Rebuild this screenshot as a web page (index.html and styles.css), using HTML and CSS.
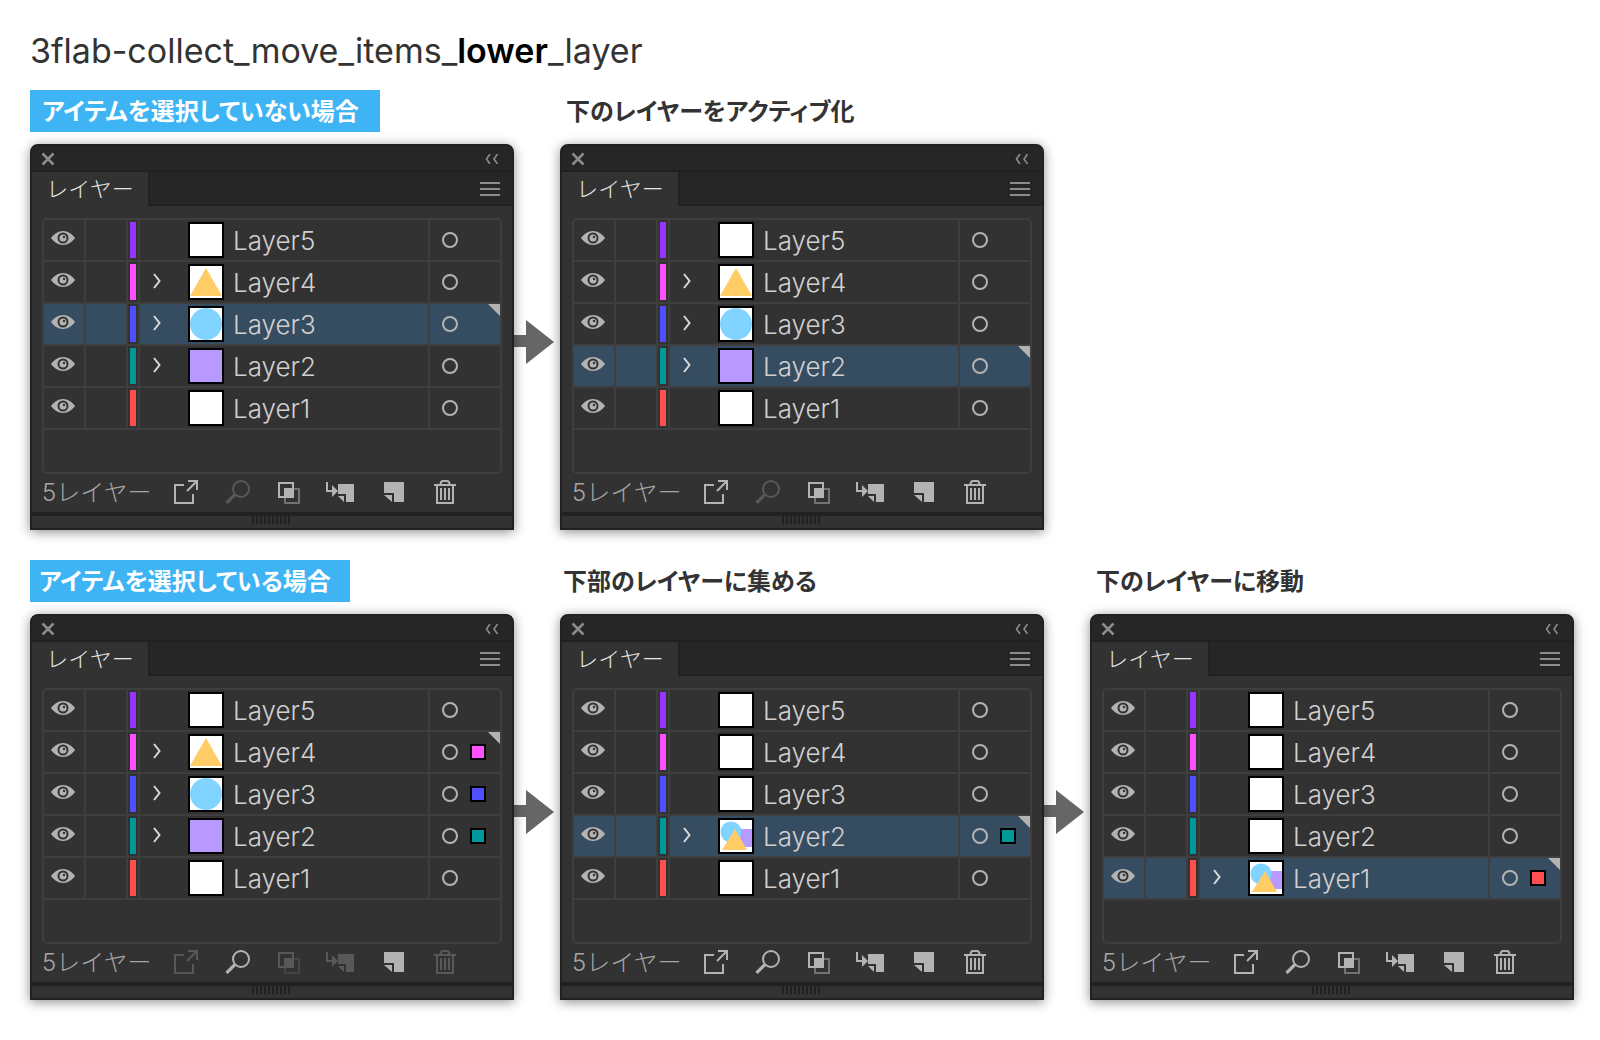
FILE: index.html
```html
<!DOCTYPE html>
<html lang="ja">
	<head>
		<meta charset="utf-8">
		<title>3flab-collect_move_items_lower_layer</title>
		<link rel="stylesheet" href="styles.css">
	</head>
	<body>
		<svg class="defs">
			<symbol id="close" viewBox="0 0 14 14"><path d="M1.500 1.500l11 11M12.500 1.500l-11 11" fill="none" stroke="currentColor" stroke-width="2.500"/></symbol>
			<symbol id="fold" viewBox="0 0 14 10"><path d="M5 0L1.500 5L5 10M12.500 0L9 5l3.500 5" fill="none" stroke="currentColor" stroke-width="1.600"/></symbol>
			<symbol id="menu" viewBox="0 0 20 14"><path d="M0 1h20M0 7h20M0 13h20" stroke="currentColor" stroke-width="2"/></symbol>
			<symbol id="eye" viewBox="0 0 24 14">
				<path d="M0 7C3 3 7 0 12 0s9 3 12 7c-3 4-7 7-12 7S3 11 0 7z" fill="currentColor"/>
				<circle cx="12" cy="7" r="4.500" fill="none" stroke="#323232" stroke-width="2"/>
				<circle cx="13" cy="6" r="1.200" fill="#323232"/>
			</symbol>
			<symbol id="arrow" viewBox="0 0 8 16"><path d="M1 1l5.500 7L1 15" fill="none" stroke="currentColor" stroke-width="2"/></symbol>
			<symbol id="export" viewBox="0 0 32 24"><path d="M14 5H5v18h18v-9M17 11L27 1M18 1h9v9" fill="none" stroke="currentColor" stroke-width="2"/></symbol>
			<symbol id="search" viewBox="0 0 32 24">
				<circle cx="19" cy="9" r="8" fill="none" stroke="currentColor" stroke-width="2"/>
				<path d="M13 14.500L4.500 23" stroke="currentColor" stroke-width="3.200"/>
			</symbol>
			<symbol id="mask" viewBox="0 0 32 24">
				<path d="M11 9h14v14H11z" fill="none" stroke="currentColor" stroke-width="2" opacity=".5"/>
				<path d="M5 3h14v14H5z" fill="none" stroke="currentColor" stroke-width="2"/>
				<path d="M10 8h10v10H10z" fill="currentColor"/>
			</symbol>
			<symbol id="sub" viewBox="0 0 32 24">
				<path d="M1 2v9h6" fill="none" stroke="currentColor" stroke-width="2"/>
				<path d="M6 5l6 6-6 6zM12 4h16v18h-8v-8h-8zM12 16h6v6z" fill="currentColor"/>
			</symbol>
			<symbol id="new" viewBox="0 0 32 24"><path d="M6 2h20v20H16v-9H6zM6 15h8v7z" fill="currentColor"/></symbol>
			<symbol id="trash" viewBox="0 0 32 24">
				<path d="M4 5h22M10.500 4.500C10.500 2 12 1 13 1h4c1 0 2.500 1 2.500 3.500M7 5v18h16V5M11 8v12M15 8v12M19 8v12" fill="none" stroke="currentColor" stroke-width="2"/>
			</symbol>
			<symbol id="triangle" viewBox="0 0 32 32"><path d="M16 2l16 28H0z" fill="#ffcc66"/></symbol>
			<symbol id="circle" viewBox="0 0 32 32"><circle cx="16" cy="16" r="16" fill="#80d4ff"/></symbol>
			<symbol id="square" viewBox="0 0 32 32"><path d="M0 0h32v32H0z" fill="#b899ff"/></symbol>
			<symbol id="mix" viewBox="0 0 32 32">
				<path d="M18 9h14v18H18z" fill="#b899ff"/>
				<circle cx="11" cy="12" r="10.500" fill="#80d4ff"/>
				<path d="M15 9l12 21H2z" fill="#ffcc66"/>
			</symbol>
		</svg>

		<h1>3flab-collect_move_items_<b>lower</b>_layer</h1>

		<section class="case">
			<h2 class="tag">アイテムを選択していない場合</h2>
			<h2 class="second">下のレイヤーをアクティブ化</h2>
			<div class="panel" data-thumbs=",triangle,circle,square," data-active="3" data-current="3" data-off="search"></div>
			<svg class="next" viewBox="0 0 46 44"><path d="M0 15h12V0l28 22-28 22V27H0z"/></svg>
			<div class="panel" data-thumbs=",triangle,circle,square," data-active="2" data-current="2" data-off="search"></div>
		</section>

		<section class="case tight">
			<h2 class="tag">アイテムを選択している場合</h2>
			<h2 class="second">下部のレイヤーに集める</h2>
			<h2 class="third">下のレイヤーに移動</h2>
			<div class="panel" data-thumbs=",triangle,circle,square," data-current="4" data-picked="4 3 2" data-off="export mask sub trash"></div>
			<svg class="next" viewBox="0 0 46 44"><path d="M0 15h12V0l28 22-28 22V27H0z"/></svg>
			<div class="panel" data-thumbs=",,,mix," data-active="2" data-current="2" data-picked="2"></div>
			<svg class="next" viewBox="0 0 46 44"><path d="M0 15h12V0l28 22-28 22V27H0z"/></svg>
			<div class="panel" data-thumbs=",,,,mix" data-active="1" data-current="1" data-picked="1"></div>
		</section>

		<script>
			var tools = [["export","書き出し"],["search","検索"],["mask","マスク"],["sub","サブレイヤー"],["new","新規レイヤー"],["trash","削除"]];
			var oPanel = document.querySelectorAll(".panel");

			function icon(name){
				return '<svg class="i-' + name + '"><use href="#' + name + '"/></svg>';
			}
			function has(list,name){
				return (list || "").split(" ").indexOf(String(name)) > -1;
			}
			//レイヤー1行分
			function row(n,thumb,d){
				var cls = "row c" + n;
				if(d.active == n) cls += " active";
				if(d.current == n) cls += " current";
				return '<li class="' + cls + '">' +
					'<button class="eye" aria-label="表示">' + icon("eye") + '</button>' +
					'<span class="lock"></span>' +
					'<span class="color"></span>' +
					'<div class="name">' +
						(thumb ? '<button class="open" aria-label="開く">' + icon("arrow") + '</button>' : '<span class="open"></span>') +
						'<span class="thumb">' + (thumb ? icon(thumb) : '') + '</span>' +
						'<span class="text">Layer' + n + '</span>' +
					'</div>' +
					'<div class="target"><button class="ring" aria-label="ターゲット"></button>' +
						(has(d.picked,n) ? '<span class="picked"></span>' : '') +
					'</div>' +
				'</li>';
			}
			for(var i=0;i<oPanel.length;i++){
				var d = oPanel[i].dataset;
				var thumbs = d.thumbs.split(",");
				var rows = "", btns = "";
				for(var j=0;j<5;j++){
					rows += row(5-j,thumbs[j],d);
				}
				for(var k=0;k<tools.length;k++){
					btns += '<button aria-label="' + tools[k][1] + '"' + (has(d.off,tools[k][0]) ? ' disabled' : '') + '>' + icon(tools[k][0]) + '</button>';
				}
				oPanel[i].innerHTML =
					'<div class="bar"><button aria-label="閉じる">' + icon("close") + '</button><button aria-label="たたむ">' + icon("fold") + '</button></div>' +
					'<div class="tabs"><button class="tab">レイヤー</button><button class="menu" aria-label="メニュー">' + icon("menu") + '</button></div>' +
					'<ul class="list">' + rows + '</ul>' +
					'<div class="foot"><span class="count">5レイヤー</span>' + btns + '</div>' +
					'<div class="grip"></div>';
			}
		</script>
	</body>
</html>
```

FILE: styles.css
```css
*{
	margin: 0;
	padding: 0;
	box-sizing: border-box;
	list-style: none;
}
body{
	padding: 26px 26px 40px 30px;
	background: #fff;
	color: #333;
	font-family: "Noto Sans CJK JP", sans-serif;
}
button{
	border: 0;
	background: none;
	color: inherit;
	font: inherit;
	cursor: pointer;
}
svg{
	display: block;
}
.defs{
	position: absolute;
	width: 0;
	height: 0;
}
h1{
	height: 64px;
	font: 400 34px/50px Inter, sans-serif;
}
h1 b{
	color: #000;
	font-weight: 600;
}
.case{
	display: grid;
	grid-template-columns: 1fr 46px 1fr 46px 1fr;
	row-gap: 12px;
	margin-bottom: 30px;
}
h2{
	height: 42px;
	padding-left: 6px;
	font-size: 24px;
	line-height: 40px;
	font-weight: 700;
	font-feature-settings: "palt";
	white-space: nowrap;
}
h2.tag{
	grid-column: 1;
	justify-self: start;
	padding: 0 21px 0 12px;
	background: #3eb4f4;
	color: #fff;
}
h2.second{
	grid-column: 3;
}
h2.third{
	grid-column: 5;
}
.tight h2.tag{
	padding: 0 19px 0 9px;
}
.tight h2.second{
	padding-left: 3px;
}
.case .tag + .second + .panel{
	grid-column: 1;
}
.next{
	width: 46px;
	height: 44px;
	margin-top: 176px;
	fill: #666;
}

.panel{
	position: relative;
	border: 2px solid #212121;
	border-radius: 8px 8px 0 0;
	background: #323232;
	color: #b3b3b3;
	box-shadow: 0 2px 12px rgba(0,0,0,0.45);
}
.bar{
	display: flex;
	justify-content: space-between;
	align-items: center;
	height: 26px;
	padding: 2px 13px 0 9px;
	border-bottom: 2px solid #212121;
	border-radius: 6px 6px 0 0;
	background: #262626;
	color: #8c8c8c;
}
.i-close{
	width: 14px;
	height: 14px;
}
.i-fold{
	width: 14px;
	height: 10px;
}
.tabs{
	display: flex;
	justify-content: space-between;
	height: 34px;
	background: linear-gradient(#262626 32px, #212121 32px);
}
.tab{
	width: 118px;
	padding-bottom: 4px;
	border-right: 2px solid #212121;
	background: #323232;
	color: #e6e6e6;
	font-size: 22px;
	line-height: 30px;
	font-weight: 300;
}
.menu{
	padding: 0 12px;
	color: #8c8c8c;
}
.i-menu{
	width: 20px;
	height: 14px;
}

.list{
	height: 256px;
	margin: 12px 10px 0;
	border: 2px solid #3e3e3e;
	border-radius: 5px;
}
.row{
	position: relative;
	display: grid;
	grid-template-columns: 42px 42px 12px 1fr 70px;
	height: 42px;
	border-bottom: 2px solid #3e3e3e;
}
.row.active{
	background: #364c61;
}
.row.current::after{
	content: "";
	position: absolute;
	top: 0;
	right: 0;
	border-top: 12px solid #b3b3b3;
	border-left: 12px solid transparent;
}
.eye,.lock,.color,.name{
	border-right: 2px solid #3e3e3e;
}
.eye{
	display: flex;
	align-items: center;
	padding: 0 0 4px 7px;
}
.i-eye{
	width: 24px;
	height: 14px;
}
.color{
	padding: 2px;
	background: #323232;
}
.color::before{
	content: "";
	display: block;
	height: 36px;
	background: var(--c);
}
.c5{ --c: #9933ff; }
.c4{ --c: #ff4fff; }
.c3{ --c: #4f4fff; }
.c2{ --c: #009999; }
.c1{ --c: #ff4f4f; }
.name{
	display: flex;
	align-items: center;
}
.open{
	width: 48px;
	padding: 0 0 2px 13px;
	color: #d9d9d9;
}
.i-arrow{
	width: 8px;
	height: 16px;
}
.thumb{
	width: 36px;
	height: 36px;
	border: 2px solid #000;
	background: #fff;
}
.thumb svg{
	width: 32px;
	height: 32px;
}
.text{
	padding: 2px 0 0 9px;
	color: #d0d0d0;
	font-family: Inter, sans-serif;
	font-size: 26px;
	line-height: 38px;
	font-weight: 300;
}
.target{
	display: flex;
	align-items: center;
	gap: 12px;
	padding-left: 12px;
}
.ring{
	width: 16px;
	height: 16px;
	border: 2px solid #b3b3b3;
	border-radius: 50%;
}
.picked{
	width: 16px;
	height: 16px;
	border: 2px solid #000;
	background: var(--c);
}

.foot{
	display: flex;
	align-items: center;
	height: 38px;
	padding: 0 40px 2px 10px;
}
.count{
	width: 118px;
	padding-top: 2px;
	color: #a6a6a6;
	font-family: Inter, "Noto Sans CJK JP", sans-serif;
	font-size: 24px;
	line-height: 34px;
	font-weight: 300;
	white-space: nowrap;
}
.foot button{
	display: flex;
	justify-content: center;
	width: 52px;
}
.foot button:disabled{
	color: #585858;
}
.foot svg{
	width: 32px;
	height: 24px;
}
.grip{
	height: 16px;
	border-top: 4px solid #212121;
}
.grip::before{
	content: "";
	display: block;
	width: 40px;
	height: 8px;
	margin: 0 auto;
	background: repeating-linear-gradient(90deg, #212121 0 2px, #323232 2px 4px);
}
```
